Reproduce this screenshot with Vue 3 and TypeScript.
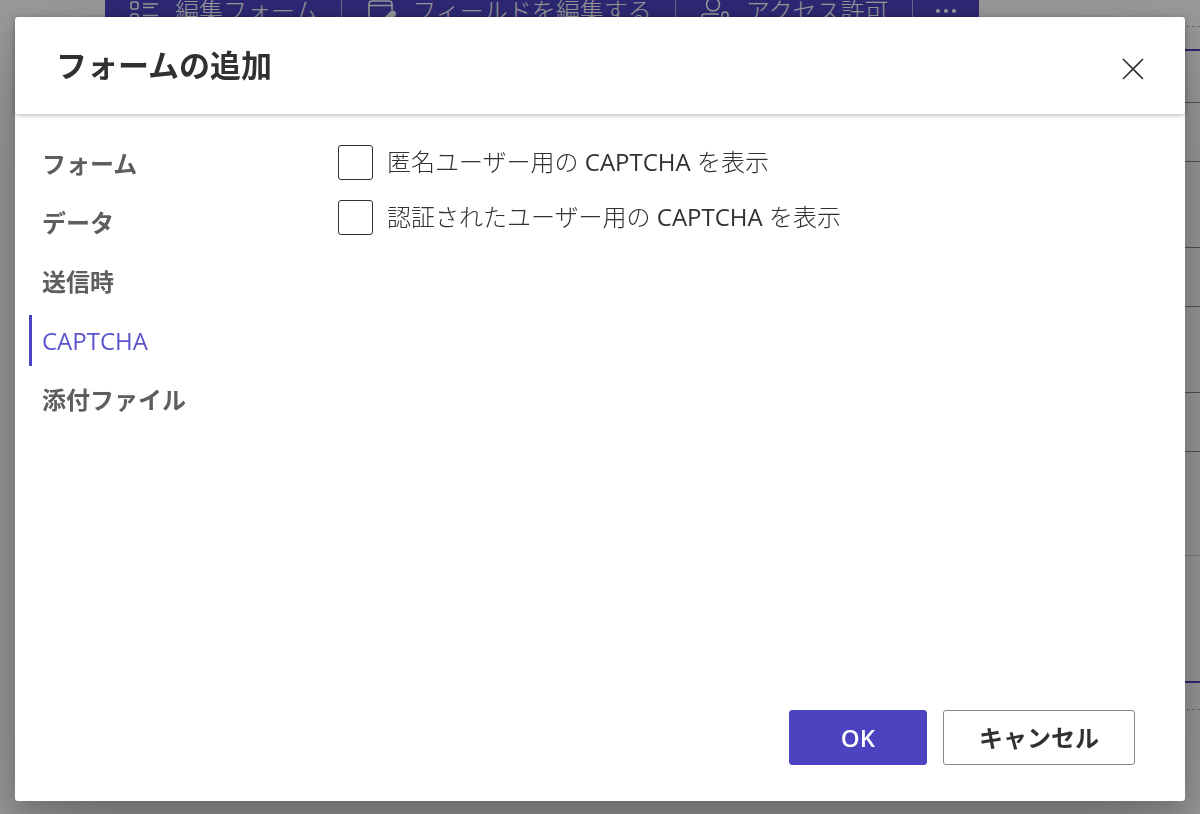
<script setup lang="ts">
import { ref } from 'vue'

interface Tab {
  id: string
  label: string
}

const tabs: Tab[] = [
  { id: 'form', label: 'フォーム' },
  { id: 'data', label: 'データ' },
  { id: 'submit', label: '送信時' },
  { id: 'captcha', label: 'CAPTCHA' },
  { id: 'files', label: '添付ファイル' },
]

const activeTab = ref('captcha')
const anonymousCaptcha = ref(false)
const authenticatedCaptcha = ref(false)
</script>

<template>
  <div class="page">
    <div class="toolbar">
      <button type="button" class="tool">
        <svg class="tool-icon" viewBox="0 0 30 30" aria-hidden="true">
          <rect x="2" y="6" width="7" height="7" rx="2" />
          <rect x="2" y="18" width="7" height="7" rx="2" />
          <path d="M14 8h15M14 11.500h11M14 19.500h15M14 23h11" />
        </svg>
        <span>編集フォーム</span>
      </button>
      <button type="button" class="tool">
        <svg class="tool-icon" viewBox="0 0 30 30" aria-hidden="true">
          <path d="M26 14V8a3 3 0 0 0-3-3H6a3 3 0 0 0-3 3v16a3 3 0 0 0 3 3h8M3 9.500h23" />
          <path class="solid" d="M17 27l1-4 7-7q2-1.500 3.500 0t0 3.500l-7 7z" />
        </svg>
        <span>フィールドを編集する</span>
      </button>
      <button type="button" class="tool">
        <svg class="tool-icon" viewBox="0 0 30 30" aria-hidden="true">
          <circle cx="13" cy="8.500" r="6.500" />
          <path d="M19 18H4.500A2.500 2.500 0 0 0 2 20.500c0 4 4 7 11 7h4M22 22v-3a2.500 2.500 0 0 1 6 0v3M20 22h9v6h-9z" />
        </svg>
        <span>アクセス許可</span>
      </button>
      <button type="button" class="tool more" aria-label="その他">
        <svg class="dots" viewBox="0 0 24 22" aria-hidden="true">
          <circle cx="4" cy="11" r="2" />
          <circle cx="12" cy="11" r="2" />
          <circle cx="20" cy="11" r="2" />
        </svg>
      </button>
    </div>
    <div class="canvas">
      <div class="section">
        <div class="row label"></div>
        <div class="row field"></div>
        <div class="row gap"></div>
        <div class="row field"></div>
        <div class="row gap"></div>
        <div class="row field"></div>
        <div class="row area"></div>
      </div>
    </div>
  </div>

  <div class="overlay">
    <section class="dialog" role="dialog" aria-modal="true" aria-labelledby="dialog-title">
      <header class="header">
        <h1 id="dialog-title">フォームの追加</h1>
        <button type="button" class="close" aria-label="閉じる">
          <svg viewBox="0 0 22 22" aria-hidden="true"><path d="M1 1l20 20M21 1L1 21" /></svg>
        </button>
      </header>
      <div class="body">
        <nav class="tabs" role="tablist" aria-orientation="vertical">
          <button
            v-for="tab in tabs"
            :key="tab.id"
            type="button"
            role="tab"
            class="tab"
            :class="{ active: tab.id === activeTab }"
            :aria-selected="tab.id === activeTab"
            @click="activeTab = tab.id"
          >
            {{ tab.label }}
          </button>
        </nav>
        <div class="options">
          <label class="option" for="anonymous-captcha">
            <input id="anonymous-captcha" v-model="anonymousCaptcha" type="checkbox" />
            <span>匿名ユーザー用の <span class="latin">CAPTCHA</span> を表示</span>
          </label>
          <label class="option" for="authenticated-captcha">
            <input id="authenticated-captcha" v-model="authenticatedCaptcha" type="checkbox" />
            <span>認証されたユーザー用の <span class="latin">CAPTCHA</span> を表示</span>
          </label>
        </div>
      </div>
      <footer class="footer">
        <button type="button" class="action primary">OK</button>
        <button type="button" class="action">キャンセル</button>
      </footer>
    </section>
  </div>
</template>

<style>
body {
  margin: 0;
  overflow: hidden;
  font-family: 'Open Sans', 'Noto Sans CJK JP', sans-serif;
}
</style>

<style scoped>
* {
  box-sizing: border-box;
}
button {
  padding: 0;
  border: 0;
  background: none;
  font-family: inherit;
  cursor: pointer;
}
.page {
  height: 100vh;
  overflow: hidden;
  background: #fff;
}
.toolbar {
  display: flex;
  width: fit-content;
  height: 22px;
  margin-left: 105px;
  background: #4b43bf;
}
.tool {
  display: flex;
  align-items: center;
  gap: 16px;
  padding: 0 23px 0 24px;
  border-right: 1px solid #b5b1e6;
  color: #fff;
  font-size: 24px;
  line-height: 22px;
  font-weight: 300;
  white-space: nowrap;
}
.tool.more {
  padding: 0 21px;
  border-right: 0;
}
.tool-icon {
  flex: none;
  width: 30px;
  height: 30px;
  fill: none;
  stroke: #fff;
  stroke-width: 1.6;
}
.tool-icon .solid {
  fill: #fff;
}
.dots {
  width: 24px;
  height: 22px;
  fill: #fff;
}
.canvas {
  margin: 4px 0 0 105px;
  padding: 22px 0 26px;
  border: dashed #b4b4b4;
  border-width: 1px 0;
}
.section {
  border: solid #4b43bf;
  border-width: 2px 0;
}
.row {
  height: 59px;
  border-bottom: 1px solid #858585;
}
.row.label {
  height: 52px;
}
.row.gap {
  height: 86px;
}
.row.area {
  height: 229px;
  border-bottom: 0;
  background: linear-gradient(#ccc, #ccc) 0 103px / 100% 1px no-repeat;
}
.overlay {
  position: fixed;
  inset: 0;
  display: flex;
  padding: 17px 15px 13px;
  background: rgba(0, 0, 0, 0.4);
}
.dialog {
  display: flex;
  flex: 1;
  flex-direction: column;
  border-radius: 3px;
  background: #fff;
  box-shadow: 0 44px 98px rgba(0, 0, 0, 0.22), 0 8px 24px rgba(0, 0, 0, 0.18);
}
.header {
  display: flex;
  align-items: center;
  justify-content: space-between;
  height: 97px;
  padding: 0 41px 2px;
  border-radius: 3px;
  box-shadow: 0 1px 5px rgba(0, 0, 0, 0.3);
}
h1 {
  margin: 0;
  color: #323130;
  font-size: 31px;
  line-height: 46px;
  font-weight: 600;
}
.close {
  display: flex;
  padding: 0;
  margin-top: 8px;
}
.close svg {
  width: 22px;
  height: 22px;
  fill: none;
  stroke: #323130;
  stroke-width: 1.6;
}
.body {
  display: flex;
  flex: 1;
  padding: 24px 14px 0;
}
.tabs {
  display: flex;
  flex-direction: column;
  gap: 8px;
  width: 309px;
}
.tab {
  height: 51px;
  padding-left: 10px;
  border-left: 3px solid transparent;
  color: #605e5c;
  font-size: 24px;
  line-height: 36px;
  font-weight: 600;
  text-align: left;
}
.tab.active {
  border-left-color: #4b43bf;
  color: #5b54cc;
  font-weight: 400;
}
.options {
  display: flex;
  flex-direction: column;
  gap: 19px;
  padding-top: 6px;
}
.option {
  display: flex;
  align-items: center;
  gap: 14px;
  height: 36px;
  color: #323130;
  font-size: 24px;
  line-height: 36px;
  font-weight: 300;
}
.latin {
  font-weight: 400;
}
.option input {
  flex: none;
  width: 35px;
  height: 35px;
  margin: 0;
  border: 1px solid #323130;
  border-radius: 3px;
  background: #fff;
  appearance: none;
}
.option input:checked {
  background: #4b43bf;
}
.footer {
  display: flex;
  justify-content: flex-end;
  gap: 16px;
  padding: 0 50px 36px;
}
.action {
  height: 55px;
  padding: 0 35px;
  border: 1px solid #8a8886;
  border-radius: 3px;
  color: #323130;
  font-size: 24px;
  line-height: 36px;
  font-weight: 600;
}
.action.primary {
  padding: 0 51px;
  border-color: #4b43bf;
  background: #4b43bf;
  color: #fff;
}
</style>
